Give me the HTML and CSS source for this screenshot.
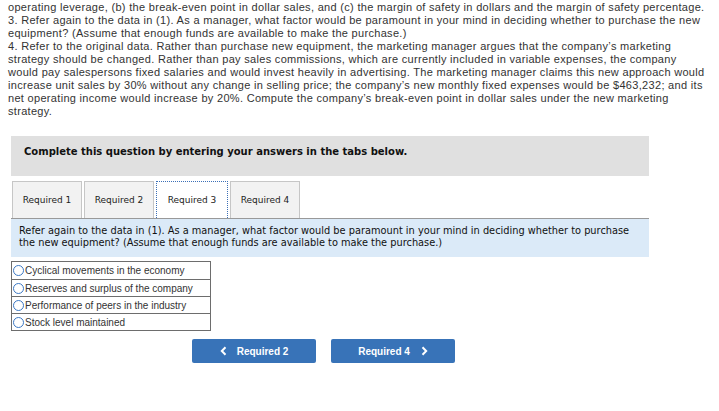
FILE: index.html
```html
<!DOCTYPE html>
<html>
<head>
<meta charset="utf-8">
<link rel="stylesheet" href="styles.css">
</head>
<body>
<div class="intro">
<p>operating leverage, (b) the break-even point in dollar sales, and (c) the margin of safety in dollars and the margin of safety percentage.</p>
<p>3. Refer again to the data in (1). As a manager, what factor would be paramount in your mind in deciding whether to purchase the new<br>equipment? (Assume that enough funds are available to make the purchase.)</p>
<p>4. Refer to the original data. Rather than purchase new equipment, the marketing manager argues that the company’s marketing<br>strategy should be changed. Rather than pay sales commissions, which are currently included in variable expenses, the company<br>would pay salespersons fixed salaries and would invest heavily in advertising. The marketing manager claims this new approach would<br>increase unit sales by 30% without any change in selling price; the company’s new monthly fixed expenses would be $463,232; and its<br>net operating income would increase by 20%. Compute the company’s break-even point in dollar sales under the new marketing<br>strategy.</p>
</div>

<div class="question">
  <div class="instructions">Complete this question by entering your answers in the tabs below.</div>
  <div class="tabs">
    <div class="tab">Required 1</div>
    <div class="tab">Required 2</div>
    <div class="tab active">Required 3</div>
    <div class="tab">Required 4</div>
  </div>
  <div class="panel">Refer again to the data in (1). As a manager, what factor would be paramount in your mind in deciding whether to purchase<br>the new equipment? (Assume that enough funds are available to make the purchase.)</div>
  <div class="options">
    <label class="option"><span class="radio"></span>Cyclical movements in the economy</label>
    <label class="option"><span class="radio"></span>Reserves and surplus of the company</label>
    <label class="option"><span class="radio"></span>Performance of peers in the industry</label>
    <label class="option"><span class="radio"></span>Stock level maintained</label>
  </div>
  <div class="nav">
    <div class="btn"><svg class="chev" width="7" height="10" viewBox="0 0 7 10"><path d="M5.5 1.2 L1.8 5 L5.5 8.8" fill="none" stroke="#fff" stroke-width="2"/></svg>Required 2</div>
    <div class="btn">Required 4<svg class="chev right" width="7" height="10" viewBox="0 0 7 10"><path d="M1.5 1.2 L5.2 5 L1.5 8.8" fill="none" stroke="#fff" stroke-width="2"/></svg></div>
  </div>
</div>
</body>
</html>
```

FILE: styles.css
```css
html, body {
  margin: 0;
  padding: 0;
  background: #fff;
}
body {
  padding: 1px 8px 0 8px;
}
.intro {
  font-family: "Liberation Sans", Arial, sans-serif;
  font-size: 11px;
  line-height: 13px;
  letter-spacing: 0.31px;
  color: #333;
  white-space: nowrap;
}
.intro p {
  margin: 0;
}
.question {
  margin: 18px 0 0 3px;
  width: 638px;
}
.instructions {
  background: #e0e0e0;
  height: 40px;
  box-sizing: border-box;
  padding: 10px 0 0 13px;
  font-family: "DejaVu Sans", Verdana, sans-serif;
  font-weight: bold;
  font-size: 10px;
  color: #111;
}
.tabs {
  display: flex;
  gap: 2px;
  margin-top: 5px;
  padding-left: 1px;
  height: 37px;
}
.tab {
  width: 70px;
  box-sizing: border-box;
  border: 1px solid #c6c6c6;
  border-bottom: none;
  background: #f2f2f2;
  font-family: "DejaVu Sans", Verdana, sans-serif;
  font-size: 9px;
  color: #222;
  display: flex;
  align-items: center;
  justify-content: center;
}
.tab.active {
  background: #fff;
  border: 1px dotted #3b6fb6;
  border-bottom: none;
  width: 72px;
}
.panel {
  background: #dbeaf8;
  border-top: 1px solid #999;
  height: 39px;
  box-sizing: border-box;
  padding: 6px 0 0 8px;
  font-family: "DejaVu Sans", Verdana, sans-serif;
  font-size: 9.8px;
  line-height: 12px;
  color: #111;
  white-space: nowrap;
}
.options {
  margin-top: 4px;
  width: 200px;
  box-sizing: border-box;
  border: 1px solid #6d6d6d;
  display: flex;
  flex-direction: column;
}
.option {
  display: flex;
  align-items: center;
  height: 17px;
  box-sizing: border-box;
  border-top: 1px solid #6d6d6d;
  font-family: "Liberation Sans", Arial, sans-serif;
  font-size: 10px;
  color: #333;
  padding-left: 1px;
}
.option:first-child {
  border-top: none;
}
.radio {
  width: 11px;
  height: 11px;
  box-sizing: border-box;
  border: 1px solid #3d79c4;
  border-radius: 50%;
  margin-right: 1px;
  background: #fff;
}
.nav {
  display: flex;
  gap: 15px;
  margin: 8px 0 0 181px;
}
.btn {
  width: 124px;
  height: 24px;
  background: #3873b8;
  border-radius: 2px;
  color: #fff;
  font-family: "Liberation Sans", Arial, sans-serif;
  font-weight: bold;
  font-size: 10px;
  display: flex;
  align-items: center;
  justify-content: center;
}
.chev {
  margin-right: 10px;
}
.chev.right {
  margin-right: 0;
  margin-left: 11px;
}
```
